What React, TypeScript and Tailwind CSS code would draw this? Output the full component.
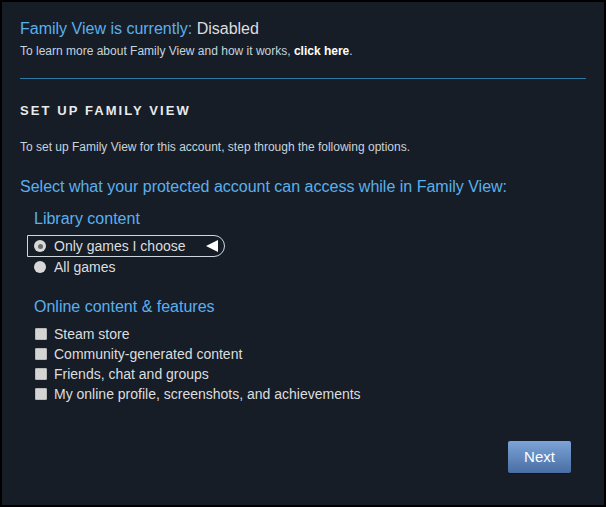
import React from "react";

const blue = "text-[#5ab0ed]";

function Radio({ checked }: { checked?: boolean }) {
  return (
    <span className="w-[12px] h-[12px] rounded-full bg-[#d8d8d8] flex items-center justify-center shrink-0">
      {checked && <span className="w-[5px] h-[5px] rounded-full bg-[#6b6b6b]" />}
    </span>
  );
}

function Check({ label }: { label: string }) {
  return (
    <div className="flex items-center h-[20px]">
      <span className="w-[12px] h-[12px] bg-[#d4d4d4] border border-[#b8b8b8] rounded-[1px] shrink-0 ml-[1px]" />
      <span className="ml-[7px] text-[14px] text-[#dcdedf]">{label}</span>
    </div>
  );
}

export default function App() {
  return (
    <div
      className="w-[606px] h-[507px] bg-black p-[2px]"
      style={{ fontFamily: '"Liberation Sans", Arial, sans-serif' }}
    >
      <div className="w-full h-full bg-[#171d27] px-[18px] pt-[16px] flex flex-col">
        <div className="text-[16px] leading-[22px]">
          <span className={blue}>Family View is currently: </span>
          <span className="text-[#dcdedf]">Disabled</span>
        </div>
        <div className="text-[12px] leading-[16px] mt-[3px] text-[#c6d4df]">
          To learn more about Family View and how it works,{" "}
          <span className="text-white font-bold">click here</span>.
        </div>
        <div className="h-px bg-[#2f7aa5] mt-[19px]" />

        <div className="mt-[24px] text-[13px] leading-[16px] tracking-[0.16em] font-bold text-[#e8eaec]">
          SET UP FAMILY VIEW
        </div>
        <div className="mt-[21px] text-[12px] leading-[14px] text-[#c6d4df]">
          To set up Family View for this account, step through the following options.
        </div>
        <div className={`mt-[23px] text-[16px] leading-[20px] ${blue}`}>
          Select what your protected account can access while in Family View:
        </div>

        <div className="pl-[6px]">
          <div className={`mt-[12px] pl-[8px] text-[16px] leading-[20px] ${blue}`}>Library content</div>
          <div className="mt-[6px] ml-[1px] w-[198px] h-[22px] border border-[#cfd6dc] rounded-r-full flex items-center pl-[6px] pr-[6px]">
            <Radio checked />
            <span className="ml-[8px] text-[14px] text-[#dcdedf] flex-1">Only games I choose</span>
            <svg width="12" height="12" viewBox="0 0 12 12">
              <polygon points="0,6 12,0 12,12" fill="#ffffff" />
            </svg>
          </div>
          <div className="flex items-center h-[20px] pl-[1px]">
            <span className="ml-[7px]">
              <Radio />
            </span>
            <span className="ml-[8px] text-[14px] text-[#dcdedf]">All games</span>
          </div>

          <div className={`mt-[20px] pl-[8px] text-[16px] leading-[20px] ${blue}`}>
            Online content &amp; features
          </div>
          <div className="mt-[7px] pl-[8px]">
            <Check label="Steam store" />
            <Check label="Community-generated content" />
            <Check label="Friends, chat and groups" />
            <Check label="My online profile, screenshots, and achievements" />
          </div>
        </div>

        <div className="flex justify-end mt-[37px] pr-[15px]">
          <button className="w-[63px] h-[32px] rounded-[2px] text-white text-[15px] bg-gradient-to-b from-[#7ca4d8] to-[#4a6ea3] shadow-[0_1px_0_rgba(0,0,0,0.3)]">
            Next
          </button>
        </div>
      </div>
    </div>
  );
}
